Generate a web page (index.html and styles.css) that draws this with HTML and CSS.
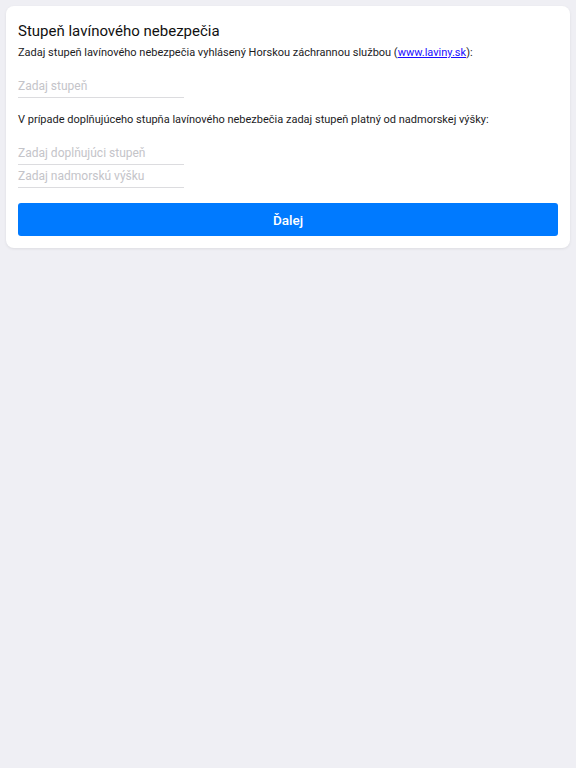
FILE: index.html
```html
<!DOCTYPE html>
<html lang="sk">
<head>
  <meta charset="UTF-8" />
  <title>Stupeň lavínového nebezpečia</title>
  <link rel="stylesheet" href="styles.css">
</head>
<body>
<main class="card">
  <h1 class="title">Stupeň lavínového nebezpečia</h1>
  <p class="note">Zadaj stupeň lavínového nebezpečia vyhlásený Horskou záchrannou službou (<a href="#">www.laviny.sk</a>):</p>
  <div class="fields first">
    <input class="field" type="text" placeholder="Zadaj stupeň" />
  </div>
  <p class="note">V prípade doplňujúceho stupňa lavínového nebezbečia zadaj stupeň platný od nadmorskej výšky:</p>
  <div class="fields">
    <input class="field" type="text" placeholder="Zadaj doplňujúci stupeň" />
    <input class="field" type="text" placeholder="Zadaj nadmorskú výšku" />
  </div>
  <button class="next" type="button">Ďalej</button>
</main>
</body>
</html>
```

FILE: styles.css
```css
html, body {
  margin: 0;
  padding: 0;
  background: #efeff4;
  font-family: 'Roboto', 'Inter', sans-serif;
  color: #1c1c1e;
}
body {
  padding: 6px;
}
.card {
  background: white;
  border-radius: 8px;
  box-shadow: 0 1px 3px rgba(0, 0, 0, 0.08);
  padding: 12px;
  display: flex;
  flex-direction: column;
}
.title {
  margin: 0;
  font-size: 15px;
  line-height: 26px;
  font-weight: 400;
  color: #111;
}
.note {
  margin: 0;
  font-size: 11px;
  line-height: 18px;
  color: #1c1c1e;
}
.note a {
  color: #1a0dff;
  text-decoration: underline;
}
.fields {
  display: flex;
  flex-direction: column;
  margin: 13px 0;
}
.field {
  width: 166px;
  box-sizing: border-box;
  height: 23px;
  padding: 0;
  border: none;
  border-bottom: 1px solid #dcdcdf;
  font-family: 'Roboto', 'Inter', sans-serif;
  font-size: 12px;
  color: #1c1c1e;
  outline: none;
  background: transparent;
}
.field::placeholder {
  color: #c4c4c9;
}
.next {
  margin-top: 2px;
  height: 33px;
  border: none;
  border-radius: 3px;
  background: #007aff;
  color: white;
  font-family: 'Roboto', 'Inter', sans-serif;
  font-size: 13.5px;
  font-weight: 500;
  cursor: pointer;
}
```
